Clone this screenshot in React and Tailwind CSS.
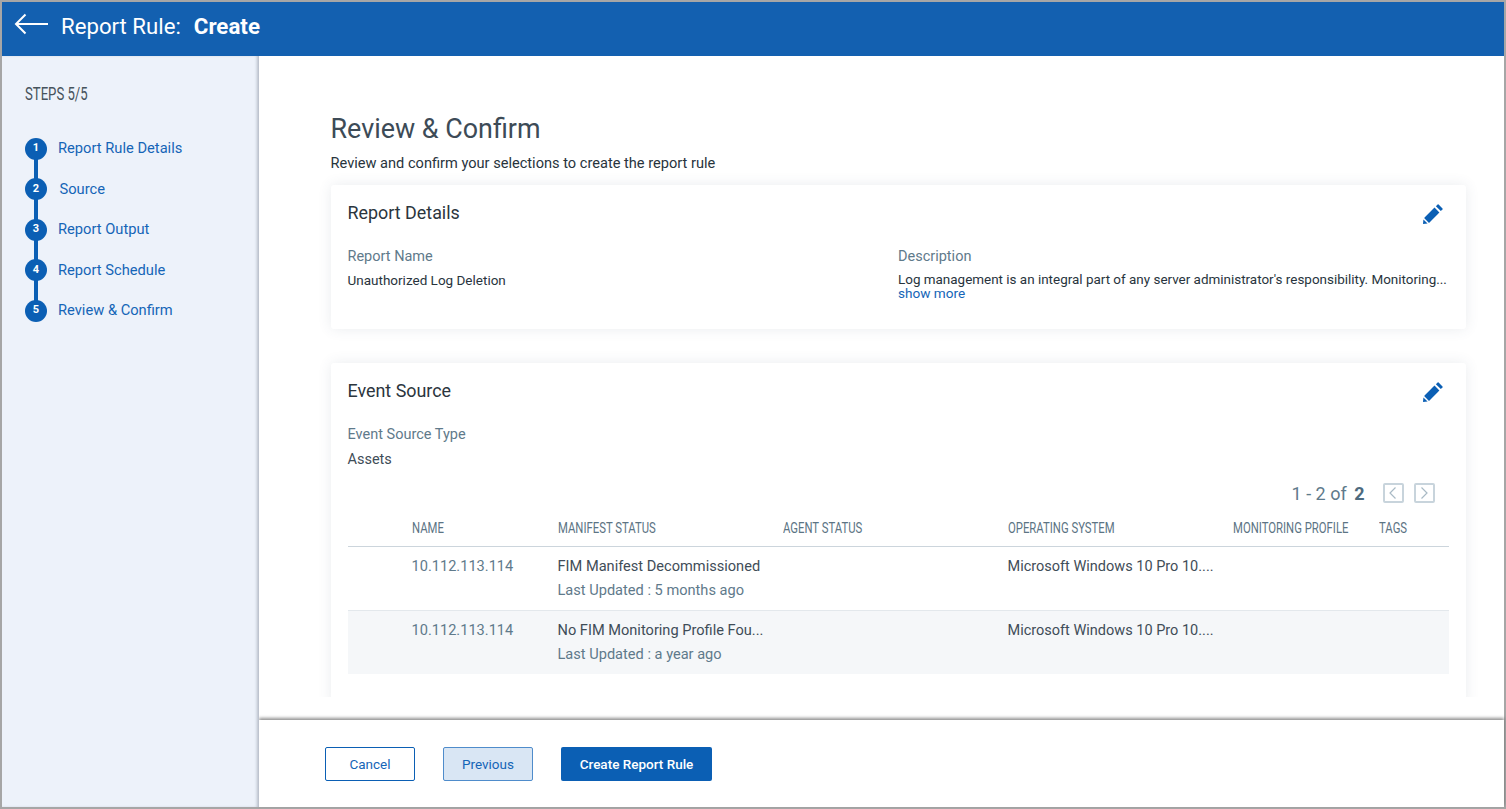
import React from "react";

const STEPS = [
  { n: 1, label: "Report Rule Details", cls: "ml-[11px]" },
  { n: 2, label: "Source", cls: "ml-[12.5px]" },
  { n: 3, label: "Report Output", cls: "ml-[11px]" },
  { n: 4, label: "Report Schedule", cls: "ml-[11px]" },
  { n: 5, label: "Review & Confirm", cls: "ml-[11px]" },
];

const COLUMNS = [
  { label: "NAME", cls: "w-[146px]" },
  { label: "MANIFEST STATUS", cls: "w-[225px]" },
  { label: "AGENT STATUS", cls: "w-[225px]" },
  { label: "OPERATING SYSTEM", cls: "w-[225px]" },
  { label: "MONITORING PROFILE", cls: "w-[146px]" },
  { label: "TAGS", cls: "flex-1" },
];

const ROWS = [
  { status: "FIM Manifest Decommissioned", updated: "Last Updated : 5 months ago", bg: "h-[64px] bg-white border-b border-[#e3e8ec]" },
  { status: "No FIM Monitoring Profile Fou...", updated: "Last Updated : a year ago", bg: "h-[63px] bg-[#f5f7f9]" },
];

const Pencil = () => (
  <svg width="20" height="20" viewBox="0 0 20 20" fill="#0b5fb4" className="mr-[6px]">
    <path d="M11.5 3.6 16.4 8.5 6 18.9 1.1 14Z" />
    <path d="M.4 15.4 4.6 19.6 0 20Z" />
    <path d="M12.9 2.2 14.6.5Q15.1 0 15.6.5L19.5 4.4Q20 4.9 19.5 5.4L17.8 7.1Z" />
  </svg>
);

const Card = ({ title, children, cls }) => (
  <div className={`rounded-[3px] bg-white px-[17px] shadow-[0_0_14px_rgba(60,80,110,0.11)] ${cls}`}>
    <div className="flex h-[57px] items-center justify-between">
      <h2 className="mb-[2px] text-[17.9px] leading-5 text-[#2b353d]">{title}</h2>
      <Pencil />
    </div>
    {children}
  </div>
);

const StepList = () => (
  <div className="relative mt-[31.5px] ml-[23px] flex flex-col gap-[18.5px]">
    <div className="absolute top-[10px] bottom-[10px] left-[9px] w-[4px] bg-[#0b5fb4]" />
    {STEPS.map((s) => (
      <div key={s.n} className="relative flex h-[22px] items-center">
        <span className="flex h-[22px] w-[22px] shrink-0 items-center justify-center rounded-full bg-[#0b5fb4] text-[11px] font-bold text-white">
          {s.n}
        </span>
        <span className={`text-[14.7px] text-[#1565b7] ${s.cls}`}>{s.label}</span>
      </div>
    ))}
  </div>
);

const PagerButton = ({ d }) => (
  <span className="flex h-[20px] w-[21px] items-center justify-center rounded-[2px] border-2 border-[#c8d4dc]">
    <svg width="10" height="14" viewBox="0 0 10 14" fill="none" stroke="#a9bac5" strokeWidth="1.2">
      <path d={d} />
    </svg>
  </span>
);

const AssetTable = () => (
  <div>
    <div className="flex h-[41px] items-center border-b border-[#ccd5dc] pl-[64px] pt-[4px]">
      {COLUMNS.map((c) => (
        <div key={c.label} className={c.cls}>
          <span className="inline-block origin-left scale-x-[0.73] whitespace-nowrap text-[15.5px] text-[#5c7484]">
            {c.label}
          </span>
        </div>
      ))}
    </div>
    {ROWS.map((r, i) => (
      <div key={i} className={`flex pl-[64px] pt-[9px] text-[14.6px] ${r.bg}`}>
        <div className="w-[146px] leading-5 text-[#5f7a8b]">10.112.113.114</div>
        <div className="w-[450px] leading-5 text-[#3f4d58]">
          <div>{r.status}</div>
          <div className="mt-1 text-[#5f7a8b]">{r.updated}</div>
        </div>
        <div className="pt-px text-[14.5px] leading-5 text-[#3f4d58]">Microsoft Windows 10 Pro 10....</div>
      </div>
    ))}
  </div>
);

export default function App() {
  return (
    <div className="flex h-[809px] w-full flex-col border-2 border-[#a6a6a6] bg-white font-['Roboto',sans-serif]">
      <header className="z-10 flex h-[54px] shrink-0 items-center bg-[#1360b0] pb-[4px] pl-[12px] text-white">
        <svg width="35" height="22" viewBox="0 0 35 22" fill="none" stroke="white" strokeWidth="2" className="mb-[6px]">
          <path d="M34 11H2M11.5 1.5 2 11l9.5 9.5" />
        </svg>
        <span className="ml-[12px] text-[22.2px]">Report Rule:</span>
        <span className="ml-[13px] text-[22.3px] font-bold">Create</span>
      </header>
      <div className="flex min-h-0 flex-1">
        <aside className="z-10 w-[257px] shrink-0 bg-[#edf2fa] pt-[26px] shadow-[inset_-3px_0_3px_-1px_rgba(80,90,110,0.35)]">
          <div className="ml-[23px] h-[24px] leading-6">
            <span className="inline-block origin-left scale-x-[0.73] whitespace-nowrap text-[18px] text-[#46535c]">
              STEPS 5/5
            </span>
          </div>
          <StepList />
        </aside>
        <div className="flex min-w-0 flex-1 flex-col">
          <main className="h-[664px] shrink-0">
            <div className="h-[641px] overflow-hidden pl-[71.5px] pr-[38.5px] pt-[56px]">
              <h1 className="text-[26.9px] leading-[34px] text-[#3d4b57]">Review &amp; Confirm</h1>
              <p className="mt-[7px] text-[14.6px] leading-5 text-[#28343d]">
                Review and confirm your selections to create the report rule
              </p>
              <Card title="Report Details" cls="mt-[12px] h-[144px]">
                <div className="grid grid-cols-2 gap-x-0 pt-[5px]">
                  <div>
                    <div className="text-[14.5px] leading-5 text-[#5f7a8b]">Report Name</div>
                    <div className="mt-[3px] text-[13.5px] leading-5 text-[#28343d]">Unauthorized Log Deletion</div>
                  </div>
                  <div>
                    <div className="text-[14.5px] leading-5 text-[#5f7a8b]">Description</div>
                    <div className="mt-[3px] whitespace-nowrap text-[13.45px] leading-5 text-[#28343d]">
                      Log management is an integral part of any server administrator's responsibility. Monitoring...
                    </div>
                    <div className="mt-[-7px] text-[13.6px] leading-5 text-[#1565b7]">show more</div>
                  </div>
                </div>
              </Card>
              <Card title="Event Source" cls="mt-[34px] pb-8">
                <div className="pt-[5px] text-[14.5px] leading-5 text-[#5f7a8b]">Event Source Type</div>
                <div className="mt-[5px] text-[14.5px] leading-5 text-[#3f4d58]">Assets</div>
                <div className="mt-[11px] flex h-[24px] items-center justify-end gap-[10px] pr-[14px]">
                  <span className="mr-[8px] text-[18px] text-[#5f7a8b]">
                    1 - 2 of <b className="ml-[3px] font-bold text-[#4d6a7e]">2</b>
                  </span>
                  <PagerButton d="M7.5 1.5 2 7l5.5 5.5" />
                  <PagerButton d="M2.5 1.5 8 7l-5.5 5.5" />
                </div>
                <div className="mt-px">
                  <AssetTable />
                </div>
              </Card>
            </div>
          </main>
          <footer className="flex flex-1 items-center gap-[28px] pl-[66px] pt-[1px] shadow-[0_-2px_3px_rgba(40,40,40,0.5)]">
            <button className="h-[34px] w-[90px] rounded-[2px] border border-[#0b5fb4] bg-white text-[13.5px] text-[#1565b7]">
              Cancel
            </button>
            <button className="h-[34px] w-[90px] rounded-[2px] border border-[#4f8ccb] bg-[#d9e6f4] text-[13.5px] text-[#1565b7]">
              Previous
            </button>
            <button className="h-[34px] w-[151px] rounded-[2px] bg-[#0b5fb4] text-[13.5px] font-medium text-white">
              Create Report Rule
            </button>
          </footer>
        </div>
      </div>
    </div>
  );
}
